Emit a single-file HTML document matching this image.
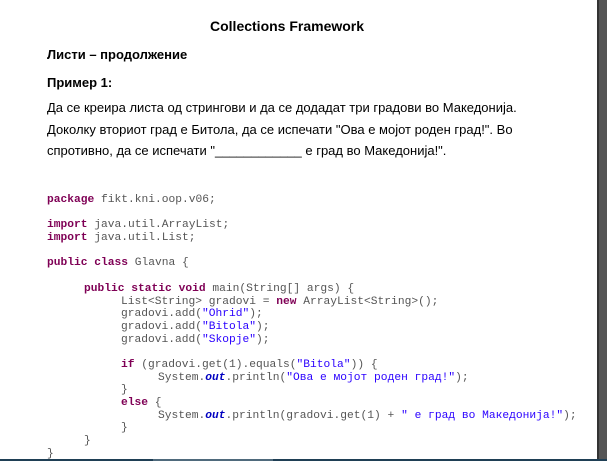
<!DOCTYPE html>
<html><head><meta charset="utf-8"><style>
html,body{margin:0;padding:0;width:607px;height:461px;overflow:hidden;background:#fff;position:relative}
.t{position:absolute;font-family:"Liberation Sans",sans-serif;color:#000;white-space:nowrap;font-size:13px;line-height:16px}
.b{font-weight:bold}
.c{position:absolute;left:47px;top:194px;font-family:"Liberation Mono",monospace;font-size:11.25px;line-height:12.7px;color:#555;margin:0}
.c div{height:12.7px;white-space:pre}
.i1{padding-left:37px}.i2{padding-left:74px}.i3{padding-left:111px}
.k{color:#7f0055;font-weight:bold}
.s{color:#2a00ff}
.f{color:#0000c0;font-weight:bold;font-style:italic}
</style></head><body>
<div class="t b" style="left:210px;top:18px;font-size:14px">Collections Framework</div>
<div class="t b" style="left:47px;top:47px">Листи – продолжение</div>
<div class="t b" style="left:47px;top:75px">Пример 1:</div>
<div class="t" style="left:47px;top:100px">Да се креира листа од стрингови и да се додадат три градови во Македонија.</div>
<div class="t" style="left:47px;top:122px">Доколку вториот град е Битола, да се испечати "Ова е мојот роден град!". Во</div>
<div class="t" style="left:47px;top:143px">спротивно, да се испечати "____________ е град во Македонија!".</div>
<div class="c"><div><span class="k">package</span> fikt.kni.oop.v06;</div><div></div><div><span class="k">import</span> java.util.ArrayList;</div><div><span class="k">import</span> java.util.List;</div><div></div><div><span class="k">public</span> <span class="k">class</span> Glavna {</div><div></div><div class="i1"><span class="k">public</span> <span class="k">static</span> <span class="k">void</span> main(String[] args) {</div><div class="i2">List&lt;String&gt; gradovi = <span class="k">new</span> ArrayList&lt;String&gt;();</div><div class="i2">gradovi.add(<span class="s">"Ohrid"</span>);</div><div class="i2">gradovi.add(<span class="s">"Bitola"</span>);</div><div class="i2">gradovi.add(<span class="s">"Skopje"</span>);</div><div></div><div class="i2"><span class="k">if</span> (gradovi.get(1).equals(<span class="s">"Bitola"</span>)) {</div><div class="i3">System.<span class="f">out</span>.println(<span class="s">"Ова е мојот роден град!"</span>);</div><div class="i2">}</div><div class="i2"><span class="k">else</span> {</div><div class="i3">System.<span class="f">out</span>.println(gradovi.get(1) + <span class="s">" е град во Македонија!"</span>);</div><div class="i2">}</div><div class="i1">}</div><div>}</div></div>
<div style="position:absolute;left:597px;top:0;width:2px;height:461px;background:#333"></div>
<div style="position:absolute;left:599px;top:0;width:8px;height:461px;background:#555"></div>
<div style="position:absolute;left:0;top:459px;width:607px;height:2px;background:#1f3f55"></div>
<div style="position:absolute;left:153px;top:459px;width:120px;height:2px;background:#4f6a7c"></div>
</body></html>
